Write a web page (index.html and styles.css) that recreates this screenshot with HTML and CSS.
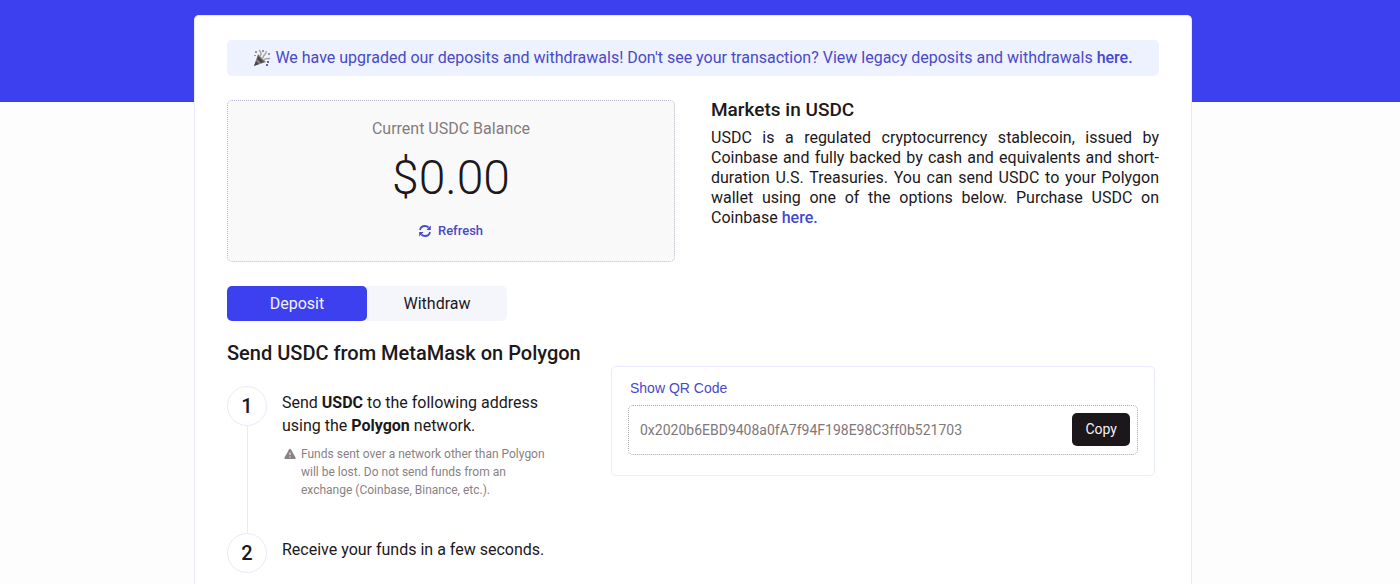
FILE: index.html
```html
<!DOCTYPE html>
<html lang="en">
<head>
<meta charset="utf-8">
<meta name="viewport" content="width=device-width, initial-scale=1">
<title>Wallet</title>
<link rel="stylesheet" href="styles.css">
</head>
<body>
<main class="page">
  <div class="card">
    <p class="banner">
      <svg class="party" viewBox="0 0 18 18" aria-hidden="true">
        <path d="M5 5 13 13 1 17Z" fill="#857e7d"/>
        <path d="M5 7 11 13 8 14 4 10ZM3 12 6 15 1 17Z" fill="#4a4546"/>
        <path d="M7 7C9 5 8 3 6 1M10 9C10 5 14 6 13 2M11 11C14 8 15 11 17 9" fill="none" stroke="#aaa4a6" stroke-width="1.5"/>
        <path d="M2 2h2v2H2zM9 1h2v2H9zM15 4h2v2h-2zM1 6h2v1H1z" fill="#9c9697"/>
        <path d="M14 12h2v2h-2zM13 15h2v2h-2z" fill="#5b5fd0"/>
      </svg>
      <span>We have upgraded our deposits and withdrawals! Don't see your transaction? View legacy deposits and withdrawals <a class="link" href="#">here.</a></span>
    </p>

    <div class="overview">
      <section class="balance">
        <h2 class="balance-label">Current USDC Balance</h2>
        <p class="balance-value">$0.00</p>
        <button class="refresh" type="button">
          <svg class="refresh-icon" viewBox="0 0 12 12" aria-hidden="true">
            <path d="M1 5C1.500 2.200 3.400 1 6 1c1.500 0 2.700.6 3.600 1.500M11 7c-.5 2.800-2.400 4-5 4-1.500 0-2.700-.6-3.600-1.500" fill="none" stroke="currentColor" stroke-width="1.800"/>
            <path d="M11.800.6V5H7.400zM.2 11.400V7h4.400z" fill="currentColor"/>
          </svg>
          Refresh
        </button>
      </section>
      <section class="about">
        <h2 class="about-title">Markets in USDC</h2>
        <p class="about-text">USDC is a regulated cryptocurrency stablecoin, issued by Coinbase and fully backed by cash and equivalents and short-duration U.S. Treasuries. You can send USDC to your Polygon wallet using one of the options below. Purchase USDC on Coinbase <a class="link" href="#">here.</a></p>
      </section>
    </div>

    <div class="tabs" role="tablist">
      <button class="tab tab-active" type="button" role="tab" aria-selected="true">Deposit</button>
      <button class="tab" type="button" role="tab" aria-selected="false">Withdraw</button>
    </div>

    <div class="transfer">
      <section>
        <h2 class="transfer-title">Send USDC from MetaMask on Polygon</h2>
        <ol class="steps">
          <li class="step">
            <div class="rail"><span class="number">1</span><span class="line"></span></div>
            <div class="step-body">
              <p>Send <strong>USDC</strong> to the following address using the <strong>Polygon</strong> network.</p>
              <div class="warning">
                <svg class="warning-icon" viewBox="0 0 12 12" aria-hidden="true">
                  <path d="M5 1.500q1-1.500 2 0l4.500 8q.7 1.500-1 1.500h-9q-1.700 0-1-1.500z" fill="currentColor"/>
                  <path d="M6 4.500v2.500M6 8.400v1.100" stroke="#fff" stroke-width="1"/>
                </svg>
                <p>Funds sent over a network other than Polygon will be lost. Do not send funds from an exchange (Coinbase, Binance, etc.).</p>
              </div>
            </div>
          </li>
          <li class="step">
            <div class="rail"><span class="number">2</span></div>
            <div class="step-body"><p>Receive your funds in a few seconds.</p></div>
          </li>
        </ol>
      </section>
      <section class="qr-panel">
        <button class="qr-button" type="button">Show QR Code</button>
        <div class="address">
          <input class="address-input" type="text" aria-label="Deposit address" value="0x2020b6EBD9408a0fA7f94F198E98C3ff0b521703" readonly>
          <button class="copy" type="button">Copy</button>
        </div>
      </section>
    </div>
  </div>
</main>
</body>
</html>
```
FILE: styles.css
```css
* {
  box-sizing: border-box;
}

body,
h2,
p,
ol {
  margin: 0;
  padding: 0;
}

body {
  background: #fdfdfd;
  color: #1c181b;
  font: 16px/20px Roboto, "Liberation Sans", sans-serif;
}

button,
input {
  border: 0;
  padding: 0;
  background: none;
  color: inherit;
  font: inherit;
}

button {
  cursor: pointer;
}

.page {
  display: flex;
  justify-content: center;
  min-height: 100vh;
  padding: 15px 14px 0 0;
  background: linear-gradient(#3d40ef, #3d40ef) top / 100% 102px no-repeat;
}

.card {
  width: 100%;
  max-width: 998px;
  padding: 24px 32px 0;
  background: #fff;
  border: 1px solid #e9ebfb;
  border-bottom: 0;
  border-radius: 5px 5px 0 0;
}

.banner {
  display: flex;
  align-items: center;
  justify-content: center;
  gap: 4px;
  padding: 8px;
  background: #eef1fe;
  border-radius: 5px;
  color: #4949c9;
}

.party {
  width: 18px;
  height: 18px;
}

.link {
  color: #4547d5;
  font-weight: 500;
  text-decoration: none;
}

.overview {
  display: grid;
  grid-template-columns: 1fr 1fr;
  gap: 36px;
  margin-top: 24px;
}

.balance {
  display: flex;
  flex-direction: column;
  align-items: center;
  padding: 18px 16px 20px;
  background: #faf9fa;
  border: 1px dotted #b9b7cf;
  border-radius: 5px;
}

.balance-label {
  color: #837b7d;
  font-size: 16px;
  font-weight: 400;
  line-height: 20px;
}

.balance-value {
  margin-top: 9px;
  font-size: 48px;
  font-weight: 300;
  line-height: 60px;
}

.refresh {
  display: flex;
  align-items: center;
  gap: 7px;
  margin-top: 13px;
  color: #4a4ac5;
  font-size: 13px;
  font-weight: 500;
  line-height: 20px;
}

.refresh-icon {
  width: 12px;
  height: 12px;
}

.about-title {
  margin-bottom: 8px;
  font-size: 19px;
  font-weight: 500;
  line-height: 20px;
}

.about-text {
  text-align: justify;
}

.tabs {
  display: inline-flex;
  margin-top: 24px;
  background: #f5f6fc;
  border-radius: 5px;
}

.tab {
  width: 140px;
  height: 35px;
  border-radius: 5px;
}

.tab-active {
  background: #3d40ef;
  color: #f3f2fd;
}

.transfer {
  display: grid;
  grid-template-columns: 348px minmax(0, 1fr);
  align-items: start;
  gap: 36px;
  margin-top: 20px;
  padding-right: 4px;
}

.transfer-title {
  font-size: 20px;
  font-weight: 500;
  line-height: 24px;
  white-space: nowrap;
}

.steps {
  margin-top: 21px;
  list-style: none;
}

.step {
  display: flex;
  gap: 15px;
}

.rail {
  display: flex;
  flex-direction: column;
  align-items: center;
}

.number {
  display: grid;
  place-items: center;
  width: 40px;
  height: 40px;
  border: 1px solid #e8e9fc;
  border-radius: 50%;
  font-size: 20px;
  font-weight: 500;
}

.line {
  flex: 1;
  width: 1px;
  background: #e8e9fc;
}

.step-body {
  max-width: 272px;
  padding: 5px 0 34px;
  line-height: 23px;
}

.step:last-child .step-body {
  padding-bottom: 0;
}

.warning {
  display: flex;
  gap: 5px;
  margin-top: 8px;
  padding-left: 2px;
  color: #8a8183;
  font-size: 12px;
  line-height: 18px;
}

.warning-icon {
  flex: none;
  width: 12px;
  height: 12px;
  margin-top: 3px;
}

.qr-panel {
  margin-top: 25px;
  padding: 11px 16px 20px;
  border: 1px solid #e9ecfc;
  border-radius: 5px;
}

.qr-button {
  display: block;
  padding: 0 2px;
  color: #4949c9;
  font-family: "Liberation Sans", Arial, sans-serif;
  font-size: 14px;
}

.address {
  display: flex;
  align-items: center;
  gap: 8px;
  margin-top: 7px;
  padding: 7px 7px 8px 11px;
  border: 1px dotted #a9a4a9;
  border-radius: 5px;
}

.address-input {
  flex: 1;
  min-width: 0;
  color: #7f7779;
  font-size: 14px;
}

.copy {
  padding: 6px 13px 7px;
  background: #1c171b;
  border-radius: 5px;
  color: #f4f2f3;
  font-size: 14px;
}
```
